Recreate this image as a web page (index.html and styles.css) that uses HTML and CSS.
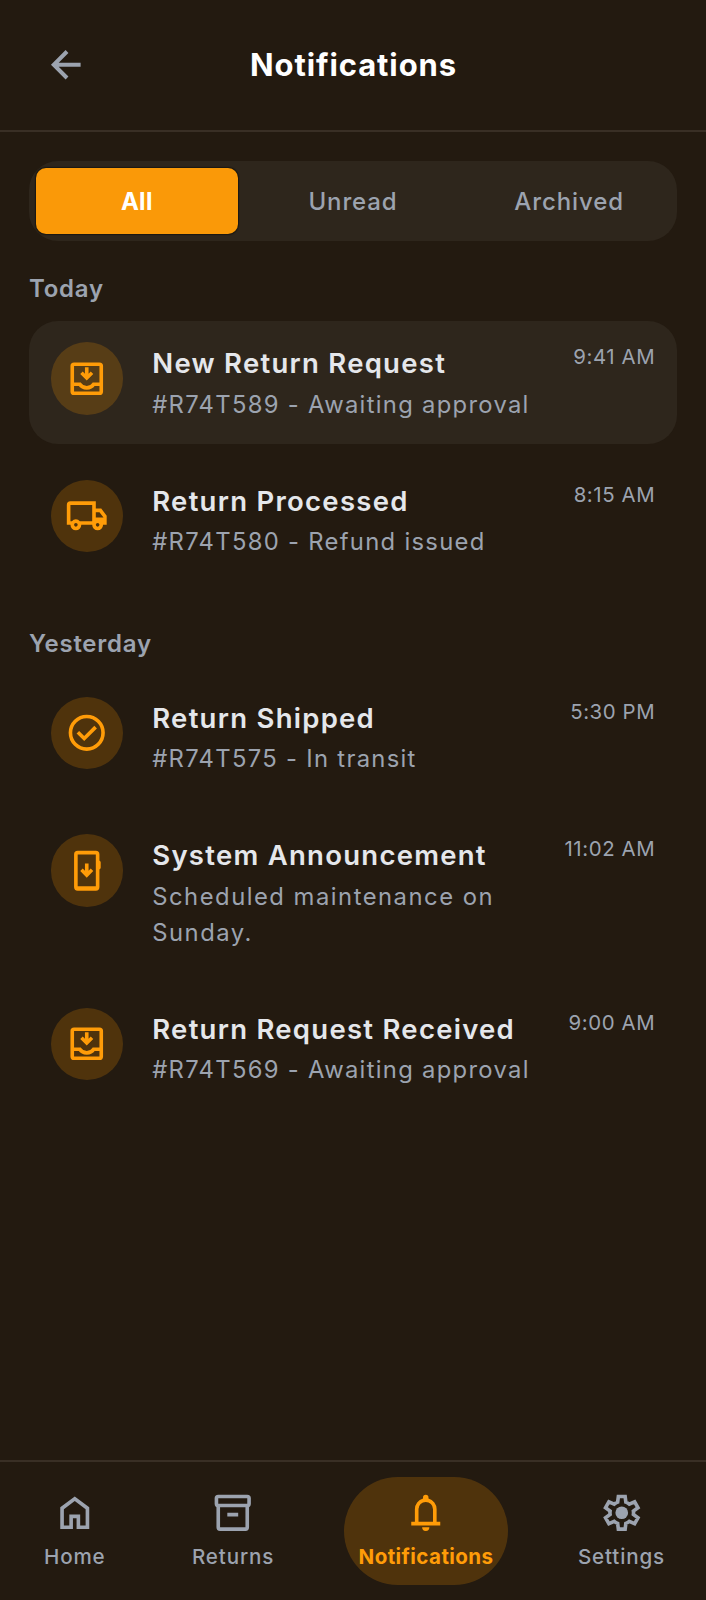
FILE: index.html
```html
<!DOCTYPE html>
<html lang="en">
<head>
<meta charset="utf-8">
<title>Notifications</title>
<link rel="stylesheet" href="styles.css">
</head>
<body>
<svg class="defs" width="0" height="0" aria-hidden="true">
  <symbol id="inbox" viewBox="0 0 24 24"><g fill="none" stroke="currentColor" stroke-width="2"><rect x="4" y="4" width="16" height="16" rx="1"/><path d="M4 15h4.200c.8 1.300 2.200 2 3.800 2s3-.7 3.800-2H20"/></g><path fill="currentColor" d="M11 5.700h2v3.500l1.200-1.200 1.400 1.400L12 13 8.400 9.400 9.800 8 11 9.200z"/></symbol>
  <symbol id="truck" viewBox="0 0 24 24"><path fill="currentColor" d="M6 20a3 3 0 0 1-3-3H1V6a2 2 0 0 1 2-2h14v4h3l3 4v5h-2a3 3 0 0 1-6 0H9a3 3 0 0 1-3 3zm0-2a1 1 0 1 0 0-2 1 1 0 0 0 0 2zM3 15h.8a2.900 2.900 0 0 1 4.400 0H15V6H3zm15 3a1 1 0 1 0 0-2 1 1 0 0 0 0 2zm-1-5h4.250L19 10h-2z"/></symbol>
  <symbol id="check" viewBox="0 0 24 24"><g fill="none" stroke="currentColor" stroke-width="2"><circle cx="12" cy="12" r="9"/><path d="M7.100 11.700l3.500 3.500 6.300-6.300"/></g></symbol>
  <symbol id="update" viewBox="0 0 24 24"><rect x="6" y="2" width="12" height="20" rx="1" fill="none" stroke="currentColor" stroke-width="2"/><path fill="currentColor" d="M6 20.500h12V22H6zM18.500 6.300q1.200 0 1.200 1v3q0 1-1.200 1zM11 8h2v4l1.200-1.200 1.400 1.400L12 15.900l-3.600-3.700 1.400-1.400L11 12z"/></symbol>
  <symbol id="home" viewBox="0 0 24 24"><path fill="currentColor" d="M6 19h3v-6h6v6h3v-9l-6-4.500L6 10zm-2 2V9l8-6 8 6v12h-7v-6h-2v6z"/></symbol>
  <symbol id="archive" viewBox="0 0 24 24"><g fill="none" stroke="currentColor" stroke-width="2"><rect x="3" y="3" width="18" height="5" rx="1"/><path d="M4 7.500V20q0 1 1 1h14q1 0 1-1V7.500M9 13h6"/></g></symbol>
  <symbol id="bell" viewBox="0 0 24 24"><path fill="currentColor" d="M4 19v-2h2v-7a6 6 0 0 1 4.500-5.800v-.7a1.500 1.500 0 0 1 3 0v.7A6 6 0 0 1 18 10v7h2v2zm8 3a2 2 0 0 1-2-2h4a2 2 0 0 1-2 2zM8 17h8v-7a4 4 0 0 0-8 0z"/></symbol>
  <symbol id="gear" viewBox="0 0 24 24"><path fill="none" stroke="currentColor" stroke-width="2" d="M10.130 3h3.740l.4 3.130a6 6 0 0 1 1.900 1.100l2.930-1.220 1.850 3.200-2.520 1.900a6 6 0 0 1 0 1.780l2.520 1.900-1.850 3.200-2.930-1.220a6 6 0 0 1-1.900 1.100L13.870 21h-3.740l-.4-3.130a6 6 0 0 1-1.900-1.100L4.900 17.990l-1.850-3.200 2.520-1.900a6 6 0 0 1 0-1.780L3.050 9.210l1.850-3.200 2.930 1.220a6 6 0 0 1 1.900-1.100z"/><circle cx="12" cy="12" r="3.500" fill="currentColor"/></symbol>
  <symbol id="back" viewBox="0 0 24 24"><path fill="none" stroke="currentColor" stroke-width="2.200" d="M20.200 12H5.500M12.700 4.700L5.400 12l7.300 7.300"/></symbol>
</svg>
<div class="screen">
  <header class="header">
    <svg class="icon"><use href="#back"/></svg>
    <h1 class="header-title">Notifications</h1>
  </header>
  <main class="content">
    <div class="tabs">
      <div class="tab tab-active">All</div>
      <div class="tab">Unread</div>
      <div class="tab">Archived</div>
    </div>
    <section class="group">
      <h2 class="group-title">Today</h2>
      <article class="item item-new">
        <div class="badge"><svg class="icon"><use href="#inbox"/></svg></div>
        <div class="body"><h3 class="title">New Return Request</h3><p class="text">#R74T589 - Awaiting approval</p></div>
        <time class="time">9:41 AM</time>
      </article>
      <article class="item">
        <div class="badge"><svg class="icon"><use href="#truck"/></svg></div>
        <div class="body"><h3 class="title">Return Processed</h3><p class="text">#R74T580 - Refund issued</p></div>
        <time class="time">8:15 AM</time>
      </article>
    </section>
    <section class="group">
      <h2 class="group-title">Yesterday</h2>
      <article class="item">
        <div class="badge"><svg class="icon"><use href="#check"/></svg></div>
        <div class="body"><h3 class="title">Return Shipped</h3><p class="text">#R74T575 - In transit</p></div>
        <time class="time">5:30 PM</time>
      </article>
      <article class="item">
        <div class="badge"><svg class="icon"><use href="#update"/></svg></div>
        <div class="body"><h3 class="title">System Announcement</h3><p class="text text-wide">Scheduled maintenance on<br>Sunday.</p></div>
        <time class="time">11:02 AM</time>
      </article>
      <article class="item">
        <div class="badge"><svg class="icon"><use href="#inbox"/></svg></div>
        <div class="body"><h3 class="title">Return Request Received</h3><p class="text">#R74T569 - Awaiting approval</p></div>
        <time class="time">9:00 AM</time>
      </article>
    </section>
  </main>
  <nav class="nav">
    <a class="nav-item"><svg class="icon"><use href="#home"/></svg><span>Home</span></a>
    <a class="nav-item"><svg class="icon"><use href="#archive"/></svg><span>Returns</span></a>
    <a class="nav-item nav-active"><svg class="icon"><use href="#bell"/></svg><span>Notifications</span></a>
    <a class="nav-item"><svg class="icon"><use href="#gear"/></svg><span>Settings</span></a>
  </nav>
</div>
</body>
</html>
```
FILE: styles.css
```css
* { box-sizing: border-box; margin: 0; padding: 0; }
body { background: #231a10; font-family: Inter, "Liberation Sans", sans-serif; color: #9ca3af; }
.defs { display: none; }
.screen { width: 706px; height: 1600px; display: flex; flex-direction: column; }
.icon { width: 43.500px; height: 43.500px; display: block; flex: none; }
.header { height: 132px; flex: none; border-bottom: 2px solid #392f25; display: flex; align-items: center; padding: 0 86px 0 43.500px; }
.header-title { flex: 1; text-align: center; color: #fff; font-size: 31px; font-weight: 700; line-height: 40px; letter-spacing: .9px; }
.content { flex: 1; padding: 29px; }
.tabs { height: 80px; background: #2e261c; border-radius: 29px; display: grid; grid-template-columns: repeat(3, 1fr); column-gap: 14.500px; padding: 7px; }
.tab { display: flex; align-items: center; justify-content: center; padding-top: 1px; font-size: 24px; font-weight: 500; letter-spacing: .9px; }
.tab-active { background: #fa9908; color: #fff; font-weight: 700; letter-spacing: .3px; border-radius: 10px; box-shadow: 0 0 1px 1px rgba(12, 14, 12, .6); }
.group { display: flex; flex-direction: column; gap: 14.500px; }
.group + .group { padding-top: 14.500px; }
.group-title { margin-top: 29px; padding-top: 1px; font-size: 24px; font-weight: 600; line-height: 35px; letter-spacing: .75px; }
.item { display: flex; align-items: flex-start; gap: 29px; padding: 21.750px 21.750px 21px; border-radius: 29px; }
.item-new { background: #2e261c; }
.badge { width: 72.500px; height: 72.500px; border-radius: 50%; background: rgba(255, 153, 0, .2); color: #ff9c08; display: grid; place-items: center; flex: none; }
.body { flex: 1; white-space: nowrap; }
.title { font-size: 27.500px; font-weight: 600; line-height: 43.500px; color: #e5e7eb; letter-spacing: 1.270px; }
.text { padding-top: .75px; font-size: 23.800px; font-weight: 400; line-height: 36px; letter-spacing: 1.300px; }
.text-wide { letter-spacing: 1.500px; }
.time { font-size: 20.400px; line-height: 29px; letter-spacing: .6px; }
.nav { height: 140px; flex: none; border-top: 2px solid #392f25; display: flex; justify-content: space-between; align-items: flex-start; padding: 14.500px 26.500px 0 29.500px; }
.nav-item { height: 108.500px; padding: 14.500px; display: flex; flex-direction: column; align-items: center; font-size: 20.600px; font-weight: 500; line-height: 29px; gap: 7.250px; letter-spacing: .85px; }
.nav-item:nth-child(2) { margin-left: 2px; }
.nav-active { background: rgba(255, 153, 0, .2); color: #ff9c08; font-weight: 700; border-radius: 54px; letter-spacing: .4px; }
```
